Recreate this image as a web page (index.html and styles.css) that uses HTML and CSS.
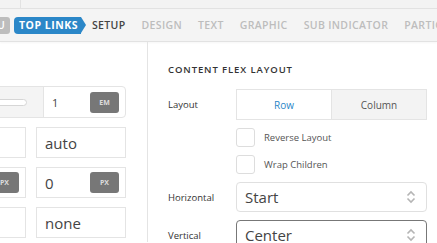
FILE: index.html
```html
<!DOCTYPE html>
<html lang="en">
<head>
    <meta charset="UTF-8">
    <title>Top Links - Setup</title>
    <link rel="stylesheet" href="styles.css">
</head>
<body>
    <div class="topstrip"><span class="topstrip-cell"></span></div>

    <div class="tabbar">
        <span class="tab tab-prev">U</span>
        <span class="tab tab-crumb">TOP LINKS</span>
        <span class="tab tab-active">SETUP</span>
        <span class="tab">DESIGN</span>
        <span class="tab">TEXT</span>
        <span class="tab">GRAPHIC</span>
        <span class="tab">SUB INDICATOR</span>
        <span class="tab">PARTICLES</span>
    </div>

    <div class="main">
        <div class="side">
            <div class="unit-row">
                <div class="slider-area"><span class="slider-track"></span></div>
                <div class="unit-input">
                    <span class="val">1</span>
                    <span class="unit">EM</span>
                </div>
            </div>
            <div class="pair">
                <div class="field"></div>
                <div class="field"><span class="big">auto</span></div>
            </div>
            <div class="pair">
                <div class="field field-unit"><span class="unit">PX</span></div>
                <div class="field field-unit"><span class="big">0</span><span class="unit">PX</span></div>
            </div>
            <div class="pair">
                <div class="field"></div>
                <div class="field"><span class="big">none</span></div>
            </div>
        </div>

        <div class="panel">
            <h3 class="panel-title">CONTENT FLEX LAYOUT</h3>

            <div class="form-row">
                <label class="form-label">Layout</label>
                <div class="segmented">
                    <span class="seg seg-on">Row</span>
                    <span class="seg">Column</span>
                </div>
            </div>

            <div class="check-row">
                <span class="check"></span>
                <span class="check-text">Reverse Layout</span>
            </div>
            <div class="check-row">
                <span class="check"></span>
                <span class="check-text">Wrap Children</span>
            </div>

            <div class="form-row">
                <label class="form-label">Horizontal</label>
                <div class="select">
                    <span class="big">Start</span>
                    <svg class="arrows" width="10" height="14" viewBox="0 0 10 14"><path d="M1.5 5.5 L5 2 L8.5 5.5 M1.5 8.5 L5 12 L8.5 8.5" fill="none" stroke="#b5b5b5" stroke-width="1.6"/></svg>
                </div>
            </div>

            <div class="form-row">
                <label class="form-label">Vertical</label>
                <div class="select select-focus">
                    <span class="big">Center</span>
                    <svg class="arrows" width="10" height="14" viewBox="0 0 10 14"><path d="M1.5 5.5 L5 2 L8.5 5.5 M1.5 8.5 L5 12 L8.5 8.5" fill="none" stroke="#b5b5b5" stroke-width="1.6"/></svg>
                </div>
            </div>
        </div>
    </div>
</body>
</html>
```

FILE: styles.css
```css
html, body {
    margin: 0;
    padding: 0;
}
body {
    width: 437px;
    height: 243px;
    overflow: hidden;
    font-family: "Open Sans", "Liberation Sans", sans-serif;
    color: #333;
    background: #fff;
}
.topstrip {
    height: 8px;
    background: #f3f3f3;
    border-bottom: 1px solid #e2e2e2;
}
.topstrip-cell {
    display: block;
    width: 20px;
    height: 8px;
    border-right: 1px solid #e2e2e2;
}
.tabbar {
    height: 32px;
    background: #f4f4f4;
    border-bottom: 1px solid #e2e2e2;
    display: flex;
    align-items: center;
    gap: 16px;
    white-space: nowrap;
    overflow: hidden;
    box-shadow: 0 1px 2px rgba(0,0,0,0.04);
}
.tab {
    flex: none;
    font-size: 10.5px;
    font-weight: 600;
    letter-spacing: 0.35px;
    color: #bdbdbd;
    line-height: 17px;
}
.tab-prev {
    background: #bdbdbd;
    color: #fff;
    border-radius: 0 3px 3px 0;
    width: 10px;
    overflow: hidden;
    text-indent: -3px;
}
.tab-crumb {
    position: relative;
    background: #2b87c8;
    color: #fff;
    font-weight: 700;
    letter-spacing: 0.5px;
    border-radius: 4px 0 0 4px;
    padding: 0 3px 0 5px;
    margin-left: -12px;
    margin-right: 2px;
}
.tab-crumb::after {
    content: "";
    position: absolute;
    top: 0;
    right: -5px;
    border-top: 8.5px solid transparent;
    border-bottom: 8.5px solid transparent;
    border-left: 5px solid #2b87c8;
}
.tab-active {
    color: #444;
    margin-left: -7px;
}
.main {
    display: flex;
    height: 200px;
}
.side {
    width: 126px;
    padding-right: 21px;
    border-right: 1px solid #e4e4e4;
    overflow: hidden;
    display: flex;
    flex-direction: column;
    align-items: flex-end;
    padding-top: 44px;
    gap: 8px;
}
.unit-row {
    flex: none;
    width: 170px;
    height: 30px;
    display: flex;
    border: 1px solid #e4e4e4;
    border-radius: 0 4px 4px 0;
}
.slider-area {
    flex: 1;
    min-width: 0;
    background: #f4f4f4;
    border-right: 1px solid #e4e4e4;
    display: flex;
    align-items: center;
}
.slider-track {
    display: block;
    width: 63px;
    height: 5px;
    border: 1px solid #d6d6d6;
    border-radius: 4px;
    background: #fff;
    margin-left: 7px;
}
.unit-input {
    flex: none;
    width: 81px;
    display: flex;
    align-items: center;
    justify-content: space-between;
    padding: 0 6px 0 8px;
    box-sizing: border-box;
}
.val {
    font-size: 11px;
    color: #444;
}
.unit {
    flex: none;
    background: #777;
    color: #ddd;
    font-size: 7px;
    font-weight: 700;
    width: 29px;
    height: 21px;
    line-height: 21px;
    text-align: center;
    border-radius: 3px;
}
.pair {
    flex: none;
    display: flex;
    gap: 10px;
    margin-top: 1px;
}
.field {
    width: 74px;
    height: 29px;
    border: 1px solid #e4e4e4;
    display: flex;
    align-items: center;
    padding: 0 6px 0 8px;
}
.field-unit {
    justify-content: space-between;
}
.field-unit:first-child {
    justify-content: flex-end;
}
.big {
    font-size: 15px;
    color: #444;
}
.panel {
    flex: 1;
    padding: 21px 0 0 20px;
}
.panel-title {
    margin: 0 0 12px;
    font-size: 9.5px;
    font-weight: 600;
    letter-spacing: 0.9px;
    color: #333;
    line-height: 14px;
}
.form-row {
    display: flex;
    align-items: center;
    margin-bottom: 8px;
}
.form-label {
    width: 68px;
    font-size: 9.5px;
    color: #333;
}
.segmented {
    width: 191px;
    height: 31px;
    display: flex;
    border: 1px solid #e4e4e4;
    box-sizing: border-box;
}
.seg {
    flex: 1;
    display: flex;
    align-items: center;
    justify-content: center;
    font-size: 10px;
    color: #555;
    background: #f3f3f3;
}
.seg-on {
    background: #fff;
    color: #2b87c8;
    border-right: 1px solid #e4e4e4;
}
.check-row {
    display: flex;
    align-items: center;
    margin: 0 0 8px 68px;
}
.check {
    width: 17px;
    height: 17px;
    border: 1px solid #ddd;
    border-radius: 3px;
}
.check-text {
    margin-left: 9px;
    font-size: 9.5px;
    color: #555;
}
.select {
    width: 191px;
    height: 30px;
    box-sizing: border-box;
    border: 1px solid #e0e0e0;
    border-radius: 4px;
    display: flex;
    align-items: center;
    justify-content: space-between;
    padding: 0 10px 0 8px;
}
.select-focus {
    border-color: #777;
}
```
